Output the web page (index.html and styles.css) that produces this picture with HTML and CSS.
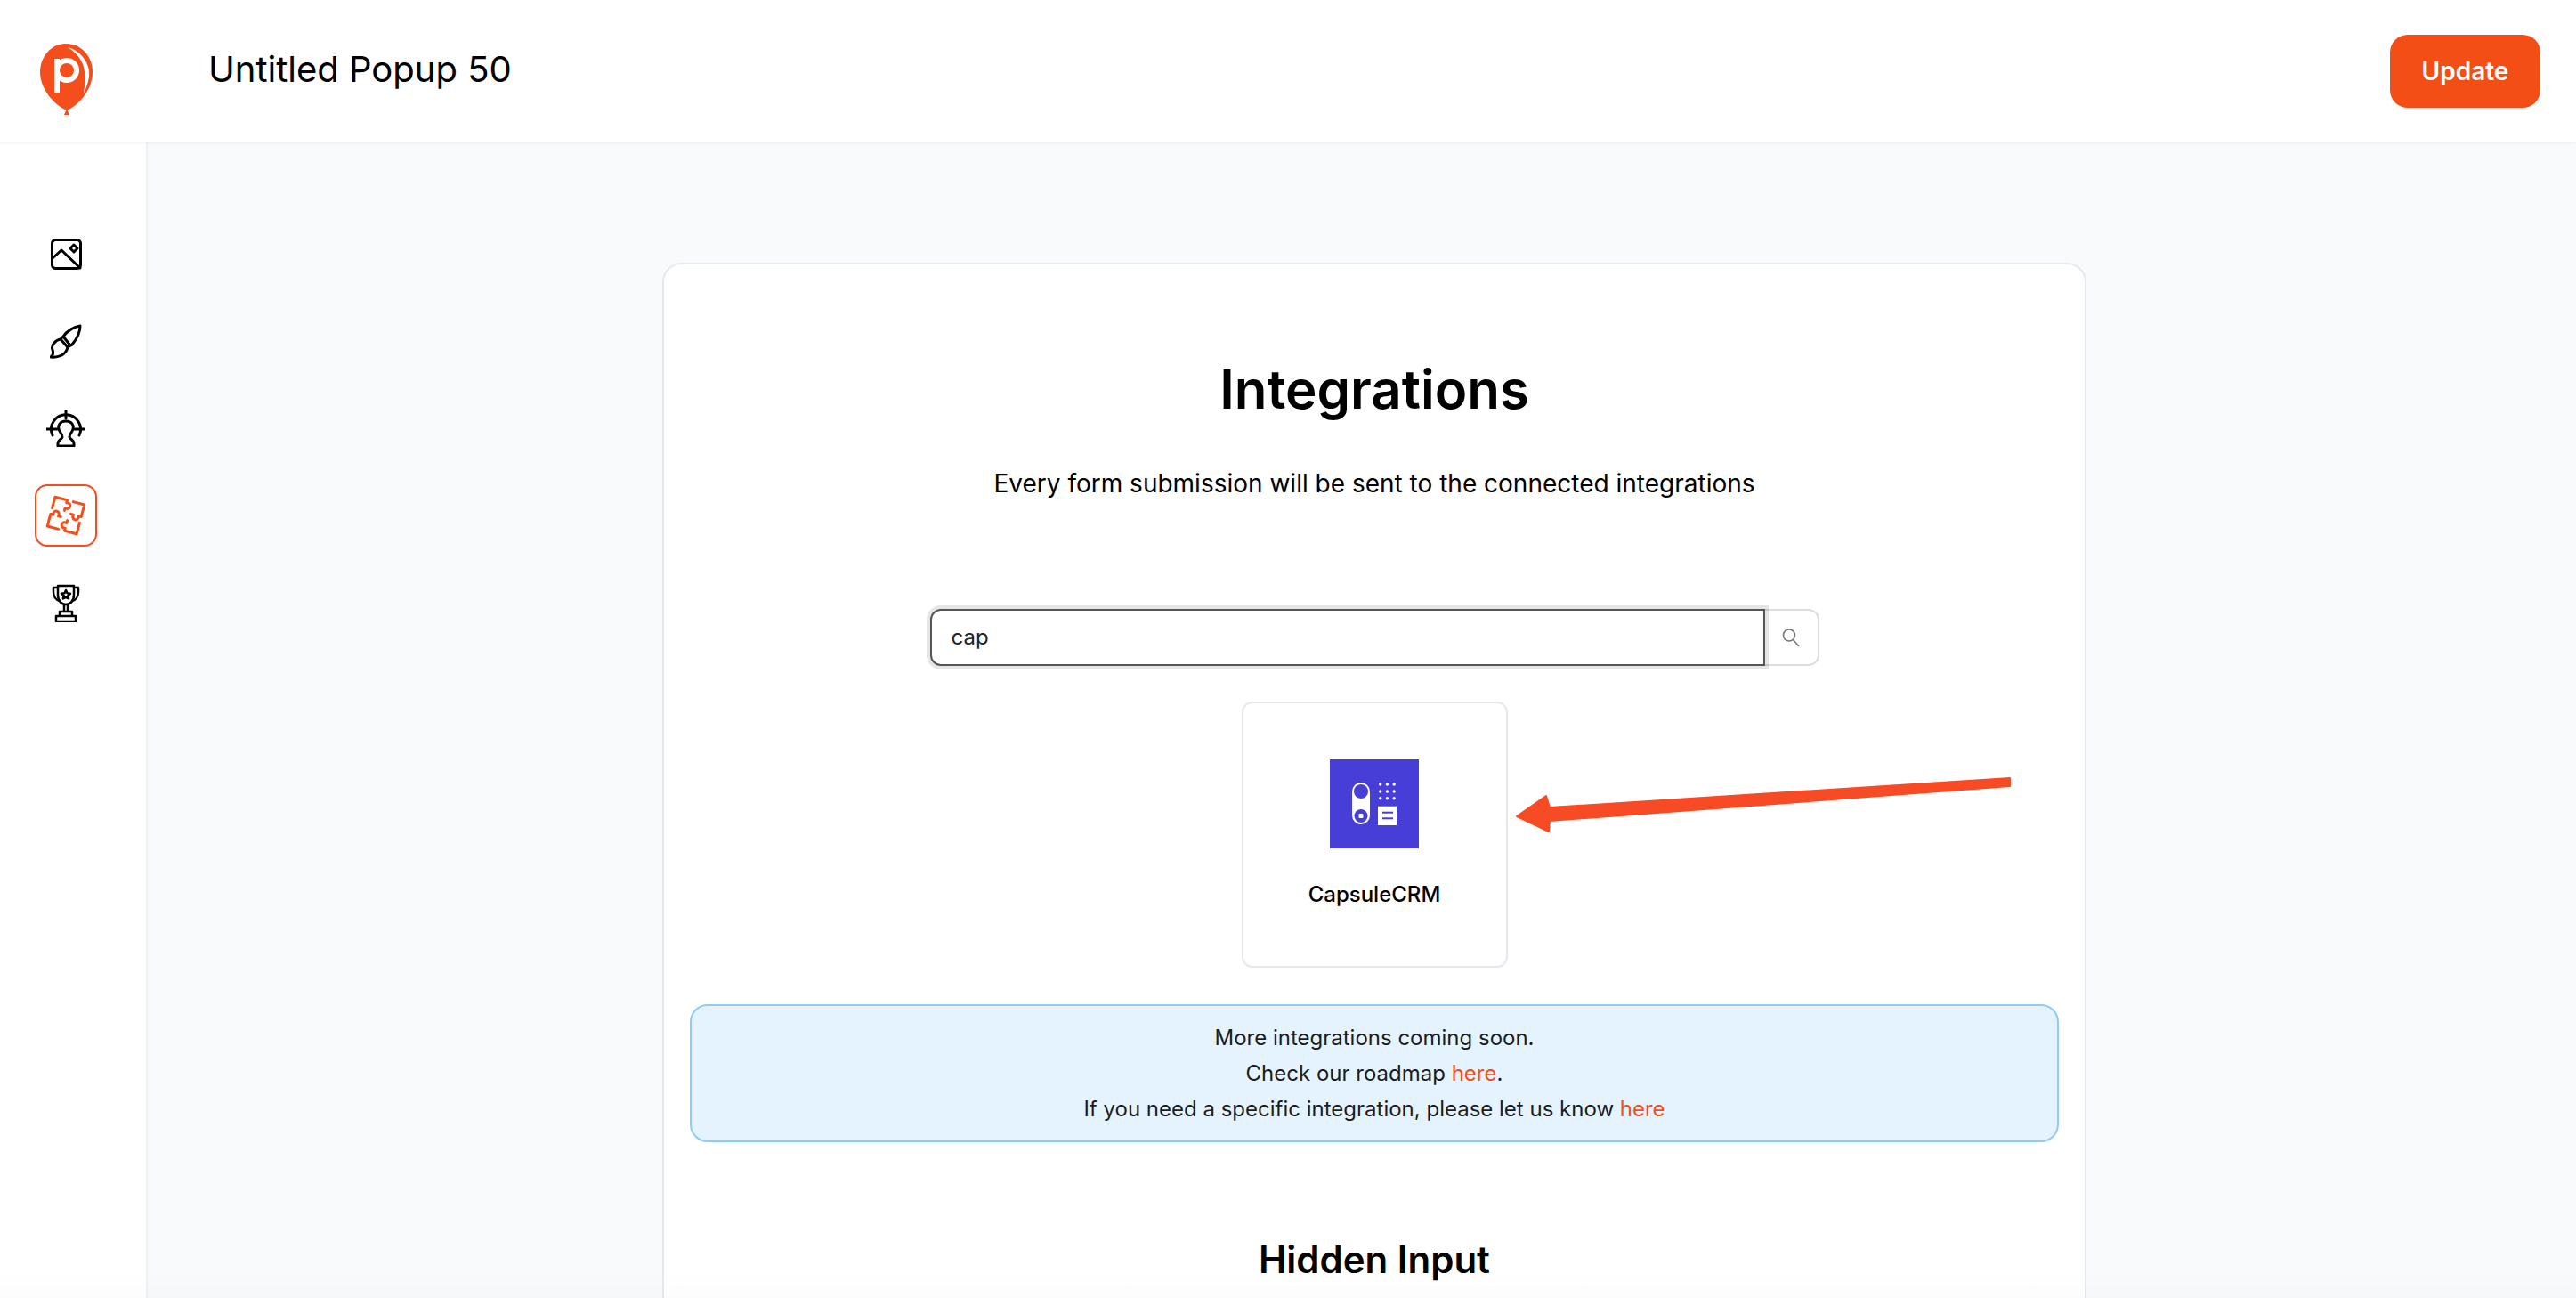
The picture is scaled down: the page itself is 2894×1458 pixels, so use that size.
FILE: index.html
```html
<!DOCTYPE html>
<html lang="en">
<head>
<meta charset="utf-8">
<title>Untitled Popup 50</title>
<link rel="stylesheet" href="styles.css">
</head>
<body>
<div class="app">
  <header class="topbar">
    <svg class="logo" width="62" height="82" viewBox="0 0 62 82">
      <path class="logo-body" d="M30 1C48 1 60 16 60 33C60 52 45 70 31 76C17 70 1 52 1 33C1 16 13 1 30 1Z"/>
      <path class="logo-body" d="M31 74L34 81H28Z"/>
      <path class="logo-mark" d="M32 5C47 9 58 24 56 38C55 46 52 52 50 57C52 44 53 30 47 20C43 13 38 9 32 5Z"/>
      <rect class="logo-mark" x="17" y="18" width="6" height="38"/>
      <circle class="logo-ring" cx="31" cy="31" r="11"/>
    </svg>
    <h2 class="title">Untitled Popup 50</h2>
    <button class="update" type="button">Update</button>
  </header>
  <div class="body-row">
    <nav class="sidebar">
      <a class="nav-item">
        <svg class="ico" width="35" height="35" viewBox="0 0 35 35"><rect x="1.5" y="1.5" width="32" height="32" rx="4"/><path d="M2 22L12 13L33 33"/><path d="M26 7L30 11L26 15L22 11Z"/></svg>
      </a>
      <a class="nav-item">
        <svg class="ico" width="36" height="39" viewBox="0 0 36 39"><path d="M15 14C19 8 27 3 34 2C34 9 30 17 25 23"/><path d="M15 14L12 17L20 26L25 23M15 14L23 24"/><path d="M12 17C6 18 1 24 3 29C4 32 4 35 1 37C9 38 18 35 20 26"/></svg>
      </a>
      <a class="nav-item">
        <svg class="ico" width="44" height="42" viewBox="0 0 44 42"><path d="M22 0V10M0 22H12M32 22H44"/><path d="M7 29A16.5 16.5 0 1 1 37 29"/><path d="M22 13C15 13 13 18 14 22C15 26 18 27 18 31C17 34 13 34 13 38V41H31V38C31 34 27 34 26 31C26 27 29 26 30 22C31 18 29 13 22 13Z"/></svg>
      </a>
      <a class="nav-item is-active">
        <svg class="ico" width="46" height="46" viewBox="-23 -23 46 46">
          <g transform="rotate(15)">
            <path d="M-17 -4V-17H-3V-14C0 -15 2 -13 2 -11C2 -9 0 -7 -3 -8V-5"/>
            <path transform="rotate(90)" d="M-17 -4V-17H-3V-14C0 -15 2 -13 2 -11C2 -9 0 -7 -3 -8V-5"/>
            <path transform="rotate(180)" d="M-17 -4V-17H-3V-14C0 -15 2 -13 2 -11C2 -9 0 -7 -3 -8V-5"/>
            <path transform="rotate(270)" d="M-17 -4V-17H-3V-14C0 -15 2 -13 2 -11C2 -9 0 -7 -3 -8V-5"/>
          </g>
        </svg>
      </a>
      <a class="nav-item">
        <svg class="ico ico-thin" width="32" height="43" viewBox="0 0 32 43"><path d="M7 2H25V12C25 19 21 23 16 23C11 23 7 19 7 12Z"/><path d="M7 4H2V9C2 14 5 18 9 19M25 4H30V9C30 14 27 18 23 19"/><path d="M14 23V30M18 23V30"/><path d="M9 31H23V36H9ZM5 36H27V42H5Z"/><path d="M16 7L17.5 10.3L21 10.7L18.4 13L19.1 16.5L16 14.8L12.9 16.5L13.6 13L11 10.7L14.5 10.3Z"/></svg>
      </a>
    </nav>
    <main class="stage">
      <section class="panel">
        <h1 class="panel-title">Integrations</h1>
        <p class="panel-sub">Every form submission will be sent to the connected integrations</p>
        <form class="search">
          <input class="search-input" type="text" value="cap">
          <button class="search-btn" type="button" aria-label="Search">
            <svg width="22" height="22" viewBox="0 0 22 22"><circle cx="9" cy="8.5" r="6.5"/><path d="M13.5 13.5L20 21"/></svg>
          </button>
        </form>
        <div class="tile">
          <svg class="tile-logo" width="100" height="100" viewBox="0 0 100 100">
            <rect class="cap-bg" width="100" height="100"/>
            <rect class="cap-w" x="25" y="26" width="20" height="47" rx="10"/>
            <circle class="cap-b" cx="35" cy="36" r="8"/>
            <circle class="cap-b" cx="35" cy="63.5" r="7.5"/>
            <rect class="cap-w" x="32.5" y="61" width="5" height="5" rx="1"/>
            <g class="cap-w">
              <circle cx="56.7" cy="28" r="1.7"/><circle cx="64.4" cy="28" r="1.7"/><circle cx="72.2" cy="28" r="1.7"/>
              <circle cx="56.7" cy="36" r="1.7"/><circle cx="64.4" cy="36" r="1.7"/><circle cx="72.2" cy="36" r="1.7"/>
              <circle cx="56.7" cy="43.7" r="1.7"/><circle cx="64.4" cy="43.7" r="1.7"/><circle cx="72.2" cy="43.7" r="1.7"/>
            </g>
            <rect class="cap-w" x="54" y="52.7" width="21" height="21.3"/>
            <rect class="cap-b" x="59" y="58.7" width="12" height="2"/>
            <rect class="cap-b" x="59" y="65.3" width="12" height="2"/>
          </svg>
          <div class="tile-name">CapsuleCRM</div>
        </div>
        <div class="notice">
          More integrations coming soon.<br>
          Check our roadmap <a class="link">here</a>.<br>
          If you need a specific integration, please let us know <a class="link">here</a>
        </div>
        <h2 class="section-title">Hidden Input</h2>
        <svg class="arrow" width="560" height="72" viewBox="0 0 560 72"><path d="M2 49L35 26L39 39L556 6V15L39 54L38 66Z"/></svg>
      </section>
    </main>
  </div>
  <div class="fade"></div>
</div>
</body>
</html>
```
FILE: styles.css
```css
* { box-sizing: border-box; }
html, body { margin: 0; height: 100%; }
body {
  font-family: Inter, "Liberation Sans", sans-serif;
  color: #000;
  background: #fff;
  overflow: hidden;
}
.app {
  position: relative;
  display: flex;
  flex-direction: column;
  height: 100vh;
  overflow: hidden;
}
.topbar {
  flex: 0 0 160px;
  display: flex;
  align-items: center;
  padding: 0 40px 0 44px;
  background: #fff;
  position: relative;
  z-index: 2;
  box-shadow: 0 1px 3px rgba(0, 0, 0, .05);
}
.logo { flex: none; margin-top: 18px; }
.logo-body { fill: #f44e1c; }
.logo-mark { fill: #fff; }
.logo-ring { fill: none; stroke: #fff; stroke-width: 6; }
.title {
  margin: 0 0 5px 128px;
  font-size: 40px;
  line-height: 48px;
  font-weight: 400;
}
.update {
  margin-left: auto;
  width: 169px;
  height: 82px;
  border: 0;
  border-radius: 20px;
  background: #f44e17;
  color: #fff;
  font: 600 28px/34px Inter, sans-serif;
}
.body-row { flex: 1; display: flex; min-height: 0; }
.sidebar {
  flex: 0 0 166px;
  display: flex;
  flex-direction: column;
  gap: 28px;
  padding: 90px 0 0 39px;
  background: #fff;
  border-right: 2px solid #f0f1f4;
}
.nav-item {
  width: 70px;
  height: 70px;
  display: flex;
  align-items: center;
  justify-content: center;
  border-radius: 14px;
  color: #000;
}
.nav-item.is-active { border: 2px solid #f44e1c; color: #f44e1c; }
.ico { fill: none; stroke: currentColor; stroke-width: 3; stroke-linecap: round; stroke-linejoin: round; }
.ico-thin { stroke-width: 2.5; }
.stage {
  flex: 1;
  min-width: 0;
  padding: 135px 0 0 578px;
  background: #f9fafb;
}
.panel {
  position: relative;
  width: 1600px;
  padding: 104px 29px 300px;
  background: #fff;
  border: 2px solid #e7e8ed;
  border-radius: 22px;
  text-align: center;
}
.panel-title {
  margin: 0 0 50px;
  font-size: 60px;
  line-height: 72px;
  font-weight: 600;
}
.panel-sub {
  margin: 0 0 121px;
  font-size: 28px;
  line-height: 40px;
}
.search {
  display: flex;
  width: 999px;
  height: 64px;
  margin: 0 auto 40px;
}
.search-input {
  flex: 1;
  min-width: 0;
  position: relative;
  z-index: 1;
  padding: 0 22px;
  border: 2px solid #555;
  border-radius: 12px 0 0 12px;
  outline: 0;
  box-shadow: 0 0 0 4px rgba(0, 0, 0, .1);
  font: 400 24px/34px Inter, sans-serif;
  color: #212529;
}
.search-btn {
  flex: 0 0 61px;
  display: flex;
  align-items: center;
  justify-content: center;
  padding: 0;
  background: #fff;
  border: 2px solid #ddd;
  border-left: 0;
  border-radius: 0 12px 12px 0;
}
.search-btn svg { fill: none; stroke: #777; stroke-width: 1.6; }
.tile {
  width: 299px;
  height: 299px;
  margin: 0 auto 41px;
  padding-top: 63px;
  border: 2px solid #e7e8ed;
  border-radius: 12px;
}
.tile-logo { display: block; margin: 0 auto 34px; }
.cap-bg { fill: #463ed6; }
.cap-w { fill: #fff; }
.cap-b { fill: #463ed6; }
.tile-name {
  font-size: 24px;
  line-height: 36px;
  font-weight: 500;
}
.notice {
  padding: 16px 20px 15px;
  background: #e5f3ff;
  border: 2px solid #90caf9;
  border-radius: 20px;
  font-size: 24px;
  line-height: 40px;
  color: #1a1d21;
}
.link { color: #f44e17; }
.section-title {
  margin: 107px 0 0;
  font-size: 42px;
  line-height: 50px;
  font-weight: 600;
}
.arrow {
  position: absolute;
  left: 956px;
  top: 571px;
  fill: #f64b25;
  stroke: #f64b25;
  stroke-width: 2;
  stroke-linejoin: round;
}
.fade {
  position: absolute;
  left: 0;
  right: 0;
  bottom: 0;
  height: 30px;
  background: linear-gradient(to bottom, rgba(0, 0, 0, 0), rgba(0, 0, 0, .012));
  pointer-events: none;
}
```
